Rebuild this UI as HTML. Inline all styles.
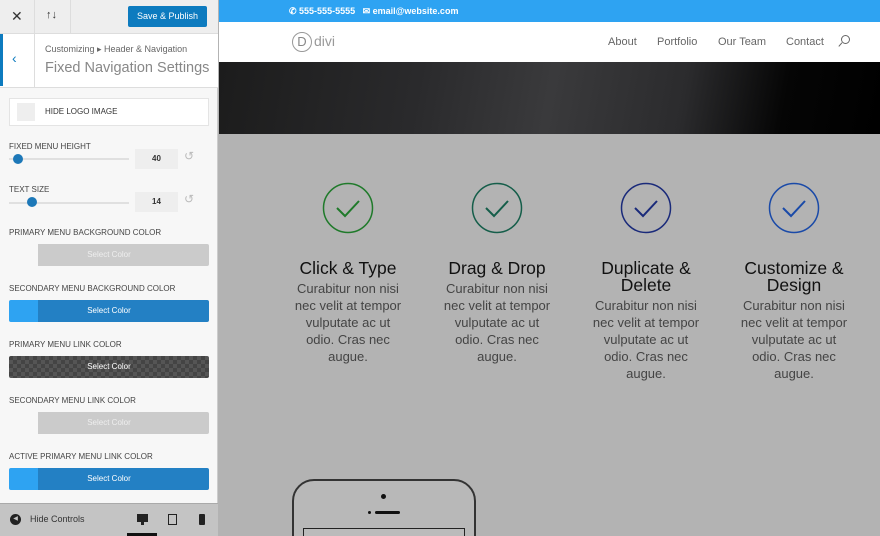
<!DOCTYPE html>
<html style="overflow:hidden"><head><meta charset="utf-8"><style>
*{margin:0;padding:0;box-sizing:border-box}
html,body{width:880px;height:536px;overflow:hidden}
body{font-family:"Liberation Sans",sans-serif;position:relative;background:#b3b3b3}
.abs{position:absolute}
#panel{left:0;top:0;width:218px;height:536px;background:#f7f7f7;border-right:1px solid #ccc}
.lbl{position:absolute;left:9px;font-size:8px;color:#444;text-transform:uppercase}
.btn{position:absolute;left:9px;width:200px;height:22px;border-radius:2px;font-size:8px;color:#fff;text-align:center;line-height:22px}
.grey{background:linear-gradient(90deg,#f7f7f7 0 29px,#cbcbcb 29px);color:#eee}
.blue{background:linear-gradient(90deg,#2ea3f2 0 29px,#2380c4 29px)}
.chk{background-color:#444;background-image:linear-gradient(45deg,#555 25%,transparent 25%,transparent 75%,#555 75%),linear-gradient(45deg,#555 25%,transparent 25%,transparent 75%,#555 75%);background-size:8px 8px;background-position:0 0,4px 4px}
.col{position:absolute;top:182px;width:120px;text-align:center;color:#111}
.col h3{font-weight:normal;font-size:17.5px;line-height:17px;margin-top:78px}
.col p{font-size:13px;line-height:17px;color:#444;margin:3px auto 0;width:112px}
.col svg{position:absolute;left:34px;top:0}
</style></head><body>
<div id="panel" class="abs">
 <div class="abs" style="left:0;top:0;width:218px;height:34px;background:#eee;border-bottom:1px solid #ddd"></div>
 <div class="abs" style="left:34px;top:0;width:1px;height:34px;background:#ddd"></div>
 <div class="abs" style="left:70px;top:0;width:1px;height:34px;background:#ddd"></div>
 <div class="abs" style="left:11px;top:8px;font-size:14px;color:#333">✕</div>
 <div class="abs" style="left:46px;top:9px;font-size:11px;color:#333">↑↓</div>
 <div class="abs" style="left:128px;top:6px;width:79px;height:21px;background:#0d7bbf;border-radius:2px;color:#fff;font-size:9px;text-align:center;line-height:21px">Save &amp; Publish</div>
 <div class="abs" style="left:0;top:34px;width:218px;height:54px;background:#fff;border-bottom:1px solid #ddd"></div>
 <div class="abs" style="left:0;top:34px;width:3px;height:52px;background:#0d7bbf"></div>
 <div class="abs" style="left:34px;top:34px;width:1px;height:54px;background:#ddd"></div>
 <div class="abs" style="left:12px;top:50px;font-size:14px;color:#0d7bbf">‹</div>
 <div class="abs" style="left:45px;top:44px;font-size:9px;color:#666">Customizing ▸ Header &amp; Navigation</div>
 <div class="abs" style="left:45px;top:60px;font-size:14.5px;color:#888">Fixed Navigation Settings</div>
 <div class="abs" style="left:9px;top:98px;width:200px;height:28px;background:#fff;border:1px solid #e4e4e4"></div>
 <div class="abs" style="left:17px;top:103px;width:18px;height:18px;background:#eee"></div>
 <div class="abs" style="left:45px;top:107px;font-size:8px;color:#333">HIDE LOGO IMAGE</div>
 <div class="lbl" style="top:142px">Fixed Menu Height</div>
 <div class="abs" style="left:9px;top:158px;width:120px;height:2px;background:#e0e0e0"></div>
 <div class="abs" style="left:13px;top:154px;width:10px;height:10px;border-radius:50%;background:#1d78b8"></div>
 <div class="abs" style="left:135px;top:149px;width:43px;height:20px;background:#eee;font-size:8px;font-weight:bold;text-align:center;line-height:20px;color:#333">40</div>
 <div class="abs" style="left:184px;top:149px;font-size:12px;color:#bbb">↺</div>
 <div class="lbl" style="top:185px">Text Size</div>
 <div class="abs" style="left:9px;top:202px;width:120px;height:2px;background:#e0e0e0"></div>
 <div class="abs" style="left:27px;top:197px;width:10px;height:10px;border-radius:50%;background:#1d78b8"></div>
 <div class="abs" style="left:135px;top:192px;width:43px;height:20px;background:#eee;font-size:8px;font-weight:bold;text-align:center;line-height:20px;color:#333">14</div>
 <div class="abs" style="left:184px;top:192px;font-size:12px;color:#bbb">↺</div>
 <div class="lbl" style="top:228px">Primary Menu Background Color</div>
 <div class="btn grey" style="top:244px">Select Color</div>
 <div class="lbl" style="top:284px">Secondary Menu Background Color</div>
 <div class="btn blue" style="top:300px">Select Color</div>
 <div class="lbl" style="top:340px">Primary Menu Link Color</div>
 <div class="btn chk" style="top:356px">Select Color</div>
 <div class="lbl" style="top:396px">Secondary Menu Link Color</div>
 <div class="btn grey" style="top:412px">Select Color</div>
 <div class="lbl" style="top:452px">Active Primary Menu Link Color</div>
 <div class="btn blue" style="top:468px">Select Color</div>
 <div class="abs" style="left:0;top:503px;width:218px;height:33px;background:#c4c4c4;border-top:1px solid #aaa"></div>
 <div class="abs" style="left:10px;top:514px;width:11px;height:11px;border-radius:50%;background:#222;color:#c4c4c4;font-size:6px;line-height:11px;text-align:center">◀</div>
 <div class="abs" style="left:30px;top:514px;font-size:9px;color:#333">Hide Controls</div>
 <div class="abs" style="left:137px;top:514px;width:11px;height:8px;background:#222"></div>
 <div class="abs" style="left:141px;top:522px;width:3px;height:3px;background:#222"></div>
 <div class="abs" style="left:127px;top:533px;width:30px;height:3px;background:#111"></div>
 <div class="abs" style="left:168px;top:514px;width:9px;height:11px;border:1.5px solid #222"></div>
 <div class="abs" style="left:199px;top:514px;width:6px;height:11px;background:#222;border-radius:1px"></div>
</div>
<div class="abs" style="left:219px;top:0;width:661px;height:22px;background:#2ea3f2"></div>
<div class="abs" style="left:289px;top:6px;font-size:9px;color:#fff;font-weight:bold">✆ 555-555-5555 &nbsp; ✉ email@website.com</div>
<div class="abs" style="left:219px;top:22px;width:661px;height:40px;background:#fff"></div>
<div class="abs" style="left:292px;top:32px;width:20px;height:20px;border:1px solid #999;border-radius:50%;font-size:13px;color:#888;text-align:center;line-height:18px">D</div>
<div class="abs" style="left:314px;top:33px;font-size:14px;color:#999">divi</div>
<div class="abs" style="left:608px;top:36px;font-size:11px;color:#666">About</div>
<div class="abs" style="left:657px;top:36px;font-size:11px;color:#666">Portfolio</div>
<div class="abs" style="left:718px;top:36px;font-size:11px;color:#666">Our Team</div>
<div class="abs" style="left:786px;top:36px;font-size:11px;color:#666">Contact</div>
<div class="abs" style="left:841px;top:35px;width:9px;height:9px;border:1.3px solid #666;border-radius:50%"></div>
<div class="abs" style="left:838px;top:44px;width:5px;height:1.3px;background:#666;transform:rotate(-50deg)"></div>
<div class="abs" style="left:219px;top:62px;width:661px;height:72px;background:linear-gradient(100deg,#1c1c1c 0%,#2a2a2c 30%,#3a3a3c 50%,#2b2b2d 70%,#050505 85%,#000 100%)"></div>
<div class="col" style="left:288px"><svg width="52" height="52"><circle cx="26" cy="26" r="24.5" fill="none" stroke="#1f7a2a" stroke-width="1.5"/><path d="M15 26l8 8 14-15" fill="none" stroke="#1f7a2a" stroke-width="2"/></svg><h3>Click &amp; Type</h3><p>Curabitur non nisi nec velit at tempor vulputate ac ut odio. Cras nec augue.</p></div>
<div class="col" style="left:437px"><svg width="52" height="52"><circle cx="26" cy="26" r="24.5" fill="none" stroke="#155e4a" stroke-width="1.5"/><path d="M15 26l8 8 14-15" fill="none" stroke="#155e4a" stroke-width="2"/></svg><h3>Drag &amp; Drop</h3><p>Curabitur non nisi nec velit at tempor vulputate ac ut odio. Cras nec augue.</p></div>
<div class="col" style="left:586px"><svg width="52" height="52"><circle cx="26" cy="26" r="24.5" fill="none" stroke="#1a2a7a" stroke-width="1.5"/><path d="M15 26l8 8 14-15" fill="none" stroke="#1a2a7a" stroke-width="2"/></svg><h3>Duplicate &amp; Delete</h3><p>Curabitur non nisi nec velit at tempor vulputate ac ut odio. Cras nec augue.</p></div>
<div class="col" style="left:734px"><svg width="52" height="52"><circle cx="26" cy="26" r="24.5" fill="none" stroke="#1a4aa8" stroke-width="1.5"/><path d="M15 26l8 8 14-15" fill="none" stroke="#1a4aa8" stroke-width="2"/></svg><h3>Customize &amp; Design</h3><p>Curabitur non nisi nec velit at tempor vulputate ac ut odio. Cras nec augue.</p></div>
<div class="abs" style="left:292px;top:479px;width:184px;height:80px;border:2px solid #333;border-radius:22px;background:#b8b8b8"></div>
<div class="abs" style="left:381px;top:494px;width:5px;height:5px;border-radius:50%;background:#111"></div>
<div class="abs" style="left:368px;top:511px;width:3px;height:3px;border-radius:50%;background:#111"></div>
<div class="abs" style="left:375px;top:511px;width:25px;height:3px;border-radius:2px;background:#111"></div>
<div class="abs" style="left:303px;top:528px;width:162px;height:10px;border:1.5px solid #222;background:#bbb"></div>
</body></html>
